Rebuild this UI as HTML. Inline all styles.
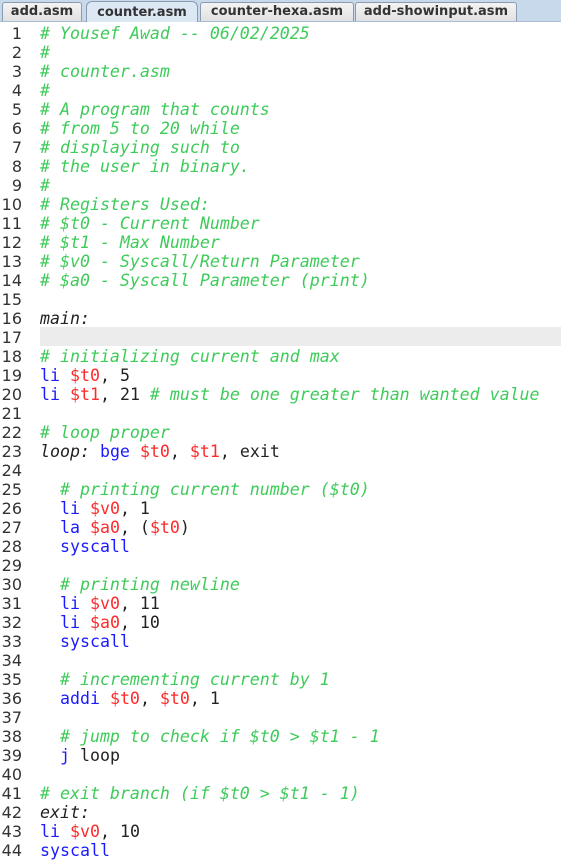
<!DOCTYPE html>
<html><head><style>
body{margin:0;width:561px;height:868px;background:#fff;overflow:hidden;position:relative;font-family:"DejaVu Sans Mono",monospace}
.tabs{position:absolute;left:0;top:0;width:561px;height:21px;background:#c9d9ec;border-bottom:1px solid #a9bcd4}
.tab{position:absolute;top:2px;height:18px;background:linear-gradient(#f4f4f4,#e2e2e2);border:1px solid #8a9bb0;border-bottom:none;font:bold 13px "DejaVu Sans",sans-serif;color:#333;text-align:center;line-height:18px;border-radius:3px 3px 0 0}
.tab.a{background:#dde8f5;top:1px;height:20px;line-height:21px;border-radius:6px 6px 0 0}
.ln{position:absolute;left:0;width:22px;text-align:right;font:16px "DejaVu Sans",sans-serif;color:#333}
.row{position:absolute;left:40px;font-size:16.6px;white-space:pre;color:#222;line-height:19px}
.c{color:#3ecb5a;font-style:italic}.k{color:#1a1aff}.r{color:#ff2a2a}.l{font-style:italic}
.hl{position:absolute;left:40px;width:521px;height:19px;top:327px;background:#ececec}
</style></head><body>
<div class="tabs">
<div class="tab" style="left:2px;width:78px">add.asm</div>
<div class="tab a" style="left:86px;width:110px">counter.asm</div>
<div class="tab" style="left:200px;width:152px">counter-hexa.asm</div>
<div class="tab" style="left:355px;width:160px">add-showinput.asm</div>
</div>
<div class="hl"></div>
<div id="c"></div>
<script>
const L=[
'<span class=c># Yousef Awad -- 06/02/2025</span>','<span class=c>#</span>','<span class=c># counter.asm</span>','<span class=c>#</span>',
'<span class=c># A program that counts</span>','<span class=c># from 5 to 20 while</span>','<span class=c># displaying such to</span>','<span class=c># the user in binary.</span>','<span class=c>#</span>',
'<span class=c># Registers Used:</span>','<span class=c># $t0 - Current Number</span>','<span class=c># $t1 - Max Number</span>','<span class=c># $v0 - Syscall/Return Parameter</span>','<span class=c># $a0 - Syscall Parameter (print)</span>','',
'<span class=l>main:</span>','','<span class=c># initializing current and max</span>',
'<span class=k>li</span> <span class=r>$t0</span>, 5',
'<span class=k>li</span> <span class=r>$t1</span>, 21 <span class=c># must be one greater than wanted value</span>','',
'<span class=c># loop proper</span>',
'<span class=l>loop:</span> <span class=k>bge</span> <span class=r>$t0</span>, <span class=r>$t1</span>, exit','',
'  <span class=c># printing current number ($t0)</span>',
'  <span class=k>li</span> <span class=r>$v0</span>, 1',
'  <span class=k>la</span> <span class=r>$a0</span>, (<span class=r>$t0</span>)',
'  <span class=k>syscall</span>','',
'  <span class=c># printing newline</span>',
'  <span class=k>li</span> <span class=r>$v0</span>, 11',
'  <span class=k>li</span> <span class=r>$a0</span>, 10',
'  <span class=k>syscall</span>','',
'  <span class=c># incrementing current by 1</span>',
'  <span class=k>addi</span> <span class=r>$t0</span>, <span class=r>$t0</span>, 1','',
'  <span class=c># jump to check if $t0 > $t1 - 1</span>',
'  <span class=k>j</span> loop','',
'<span class=c># exit branch (if $t0 > $t1 - 1)</span>',
'<span class=l>exit:</span>',
'<span class=k>li</span> <span class=r>$v0</span>, 10',
'<span class=k>syscall</span>'];
let h='';L.forEach((s,i)=>{const t=23.5+i*19;h+=`<div class=ln style="top:${t}px;line-height:19px">${i+1}</div><div class=row style="top:${t}px">${s}</div>`});
document.getElementById('c').innerHTML=h;
</script>
</body></html>
